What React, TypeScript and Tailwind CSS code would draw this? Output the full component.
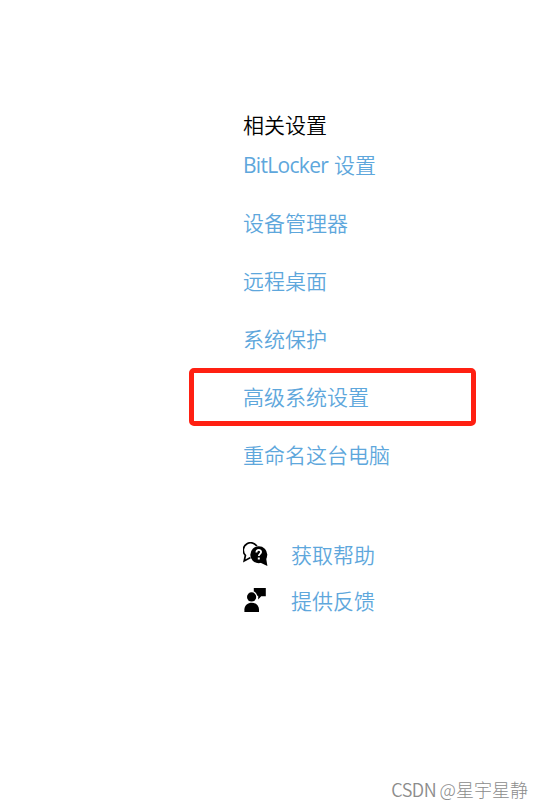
import type { ReactNode } from "react";

interface SettingLink {
  prefix?: string;
  label: string;
  highlighted?: boolean;
}

const links: SettingLink[] = [
  { prefix: "BitLocker", label: "设置" },
  { label: "设备管理器" },
  { label: "远程桌面" },
  { label: "系统保护" },
  { label: "高级系统设置", highlighted: true },
  { label: "重命名这台电脑" },
];

function HelpIcon() {
  return (
    <svg width="26" height="26" viewBox="0 0 26 26">
      <path
        d="M1.2 19 2.4 13.4A7.4 7.4 0 1 1 7.5 15.6Z"
        fill="#fff"
        stroke="#000"
        strokeWidth="1.7"
      />
      <circle cx="15.8" cy="12.7" r="9" fill="#fff" />
      <circle cx="15.8" cy="12.7" r="8.5" />
      <path d="M23 15.5 24.4 24 17 20.5Z" />
      <path
        d="M13.4 10.4C13.4 7.2 18.1 7.2 18.1 10.1c0 1.8-2.3 1.9-2.3 4"
        fill="none"
        stroke="#fff"
        strokeWidth="1.8"
      />
      <rect x="14.8" y="15.5" width="2" height="2" fill="#fff" />
    </svg>
  );
}

function FeedbackIcon() {
  return (
    <svg width="26" height="26" viewBox="0 0 26 26">
      <circle cx="8.6" cy="8.9" r="4.6" />
      <path d="M1.4 24v-2.4c0-9.2 14.6-9.2 14.6 0V24Z" />
      <path d="M10.8 0h12v8.2h-4.6L15.2 11.4V7.8H14.2C13.8 5.6 12.6 4.2 10.8 3.6Z" />
    </svg>
  );
}

function SupportRow({ icon, label }: { icon: ReactNode; label: string }) {
  return (
    <a className="flex h-[46px] items-center">
      <span className="w-12 shrink-0">{icon}</span>
      <span>{label}</span>
    </a>
  );
}

export default function App() {
  return (
    <main className="flex h-[808px] w-[544px] flex-col overflow-hidden bg-white font-['Noto_Sans','Noto_Sans_CJK_SC',sans-serif] text-[21px] leading-[30px] font-[350] text-[#5ea7dc]">
      <section className="ml-[243px] pt-[110px]">
        <h2 className="text-black">相关设置</h2>
        <nav className="-mt-1 flex flex-col">
          {links.map((link) => (
            <a key={link.label} className="relative flex h-[58px] items-center whitespace-nowrap">
              {link.prefix && (
                <span className="mr-1.5 w-[85px] font-['Open_Sans','Noto_Sans',sans-serif] font-normal tracking-[-0.7px]">
                  {link.prefix}
                </span>
              )}
              {link.label}
              {/* 高亮框 */}
              {link.highlighted && (
                <span className="absolute top-[-0.5px] left-[-54px] h-[58px] w-[287px] rounded-[5px] border-5 border-[#ff2012]" />
              )}
            </a>
          ))}
        </nav>
        <div className="mt-12 flex flex-col">
          <SupportRow icon={<HelpIcon />} label="获取帮助" />
          <SupportRow icon={<FeedbackIcon />} label="提供反馈" />
        </div>
      </section>

      <footer className="mt-auto mr-4 mb-[5px] self-end font-['Noto_Sans_CJK_SC',sans-serif] text-[18px] leading-7 font-light text-[#8c8c8c]">
        <span className="font-[350] tracking-[-0.5px]">CSDN </span>@星宇星静
      </footer>
    </main>
  );
}
